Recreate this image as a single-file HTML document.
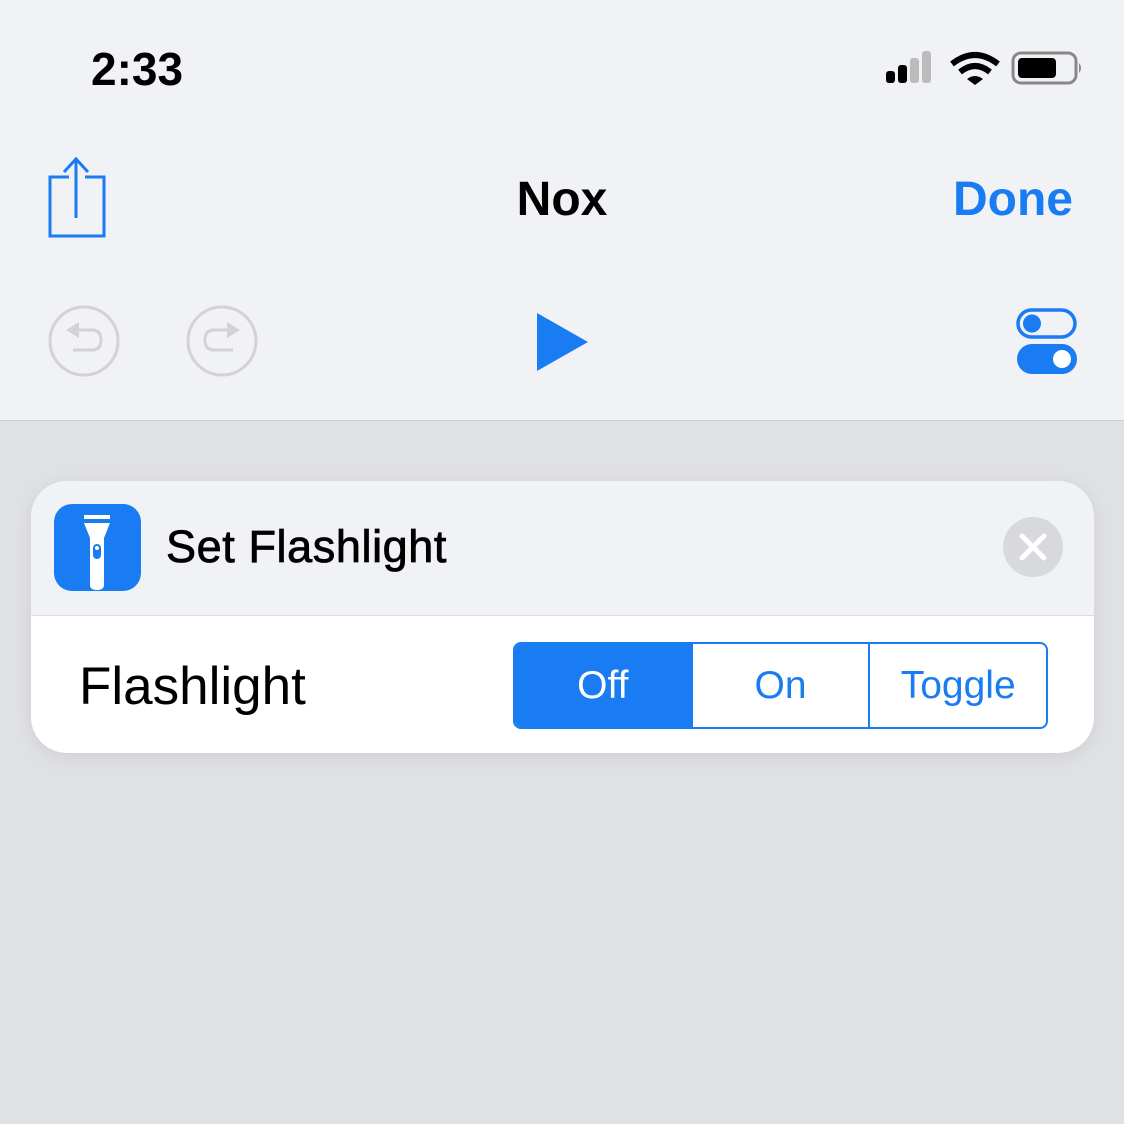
<!DOCTYPE html>
<html><head><style>
body{margin:0;width:1124px;height:1124px;background:#e0e1e5;font-family:"Liberation Sans",sans-serif;position:relative;overflow:hidden}
.top{position:absolute;left:0;top:0;width:1124px;height:420px;background:#f1f2f5;border-bottom:1px solid #cfd0d4}
.t{position:absolute;white-space:nowrap}
.card{position:absolute;left:31px;top:481px;width:1063px;height:272px;border-radius:36px;background:#fff;overflow:hidden;box-shadow:0 4px 18px rgba(0,0,0,0.08)}
.hdr{position:absolute;left:0;top:0;width:100%;height:134px;background:#f1f2f5;border-bottom:1px solid #dcdde0}
.seg{position:absolute;left:513px;top:642px;width:531px;height:83px;border:2px solid #1a7cf2;border-radius:8px;display:flex;overflow:hidden;box-sizing:content-box}
.seg div{flex:1;text-align:center;line-height:83px;font-size:39px;color:#1a7cf2}
</style></head><body>
<div class="top"></div>
<div class="t" style="left:91px;top:42px;font-size:46px;font-weight:bold;color:#000">2:33</div>
<svg class="t" style="left:880px;top:48px" width="210" height="45">
<rect x="6" y="23" width="9" height="12" rx="3" fill="#000"/><rect x="18" y="17" width="9" height="18" rx="3" fill="#000"/><rect x="30" y="10" width="9" height="25" rx="3" fill="#bbb"/><rect x="42" y="3" width="9" height="32" rx="3" fill="#bbb"/>
<path d="M72 16 Q95 -2 118 16" stroke="#000" stroke-width="6" fill="none"/><path d="M80 24 Q95 12 110 24" stroke="#000" stroke-width="6" fill="none"/><path d="M87 31 L95 37 L103 31 Q95 25 87 31Z" fill="#000"/>
<rect x="133" y="5" width="63" height="30" rx="8" fill="none" stroke="#888" stroke-width="3"/><rect x="138" y="10" width="38" height="20" rx="4" fill="#000"/><path d="M199 15 Q203 20 199 25Z" fill="#888"/>
</svg>
<svg class="t" style="left:40px;top:150px" width="80" height="100"><path d="M29 27 H10 V86 H64 V27 H45" fill="none" stroke="#1a7cf2" stroke-width="3"/><path d="M36 68 V8 M24 22 L36 9 L48 22" fill="none" stroke="#1a7cf2" stroke-width="3"/></svg>
<div class="t" style="left:0;width:1124px;text-align:center;top:172px;font-size:48px;font-weight:bold;color:#000">Nox</div>
<div class="t" style="left:953px;top:172px;font-size:48px;font-weight:bold;color:#1a7cf2">Done</div>
<svg class="t" style="left:40px;top:300px" width="240" height="85">
<circle cx="44" cy="41" r="34" fill="none" stroke="#d3d3d6" stroke-width="3"/><path d="M32 30 H52 Q61 30 61 40 Q61 50 52 50 H33" fill="none" stroke="#d3d3d6" stroke-width="3"/><path d="M26 30 L39 22 V38Z" fill="#d3d3d6"/>
<circle cx="182" cy="41" r="34" fill="none" stroke="#d3d3d6" stroke-width="3"/><path d="M194 30 H174 Q165 30 165 40 Q165 50 174 50 H193" fill="none" stroke="#d3d3d6" stroke-width="3"/><path d="M200 30 L187 22 V38Z" fill="#d3d3d6"/></svg>
<svg class="t" style="left:530px;top:310px" width="64" height="64"><path d="M7 3 L58 32 L7 61Z" fill="#1a7cf2"/></svg>
<svg class="t" style="left:1014px;top:306px" width="66" height="72"><rect x="4" y="4" width="57" height="27" rx="13.5" fill="none" stroke="#1a7cf2" stroke-width="3.5"/><circle cx="18" cy="17.5" r="9" fill="#1a7cf2"/><rect x="3" y="38" width="60" height="30" rx="15" fill="#1a7cf2"/><circle cx="48" cy="53" r="9" fill="#fff"/></svg>
<div class="card"><div class="hdr"></div></div>
<svg class="t" style="left:54px;top:504px" width="88" height="88"><rect width="87" height="87" rx="18" fill="#1a7cf2"/><rect x="30" y="11" width="26" height="4" fill="#fff"/><path d="M30 19 H56 L50 34 V81 Q50 86 43 86 Q36 86 36 81 V34Z" fill="#fff"/><rect x="39" y="40" width="8" height="15" rx="4" fill="#1a7cf2"/><circle cx="43" cy="44" r="2" fill="#fff"/></svg>
<div class="t" style="left:166px;top:521px;font-size:45px;color:#000;letter-spacing:0.6px;-webkit-text-stroke:0.8px #000">Set Flashlight</div>
<svg class="t" style="left:1001px;top:516px" width="64" height="64"><circle cx="32" cy="31" r="30" fill="#d8d9dc"/><path d="M21 20 L43 42 M43 20 L21 42" stroke="#fff" stroke-width="5" stroke-linecap="round"/></svg>
<div class="t" style="left:79px;top:656px;font-size:53px;color:#000">Flashlight</div>
<div class="seg"><div style="background:#1a7cf2;color:#fff">Off</div><div style="border-left:2px solid #1a7cf2;border-right:2px solid #1a7cf2">On</div><div>Toggle</div></div>
</body></html>
